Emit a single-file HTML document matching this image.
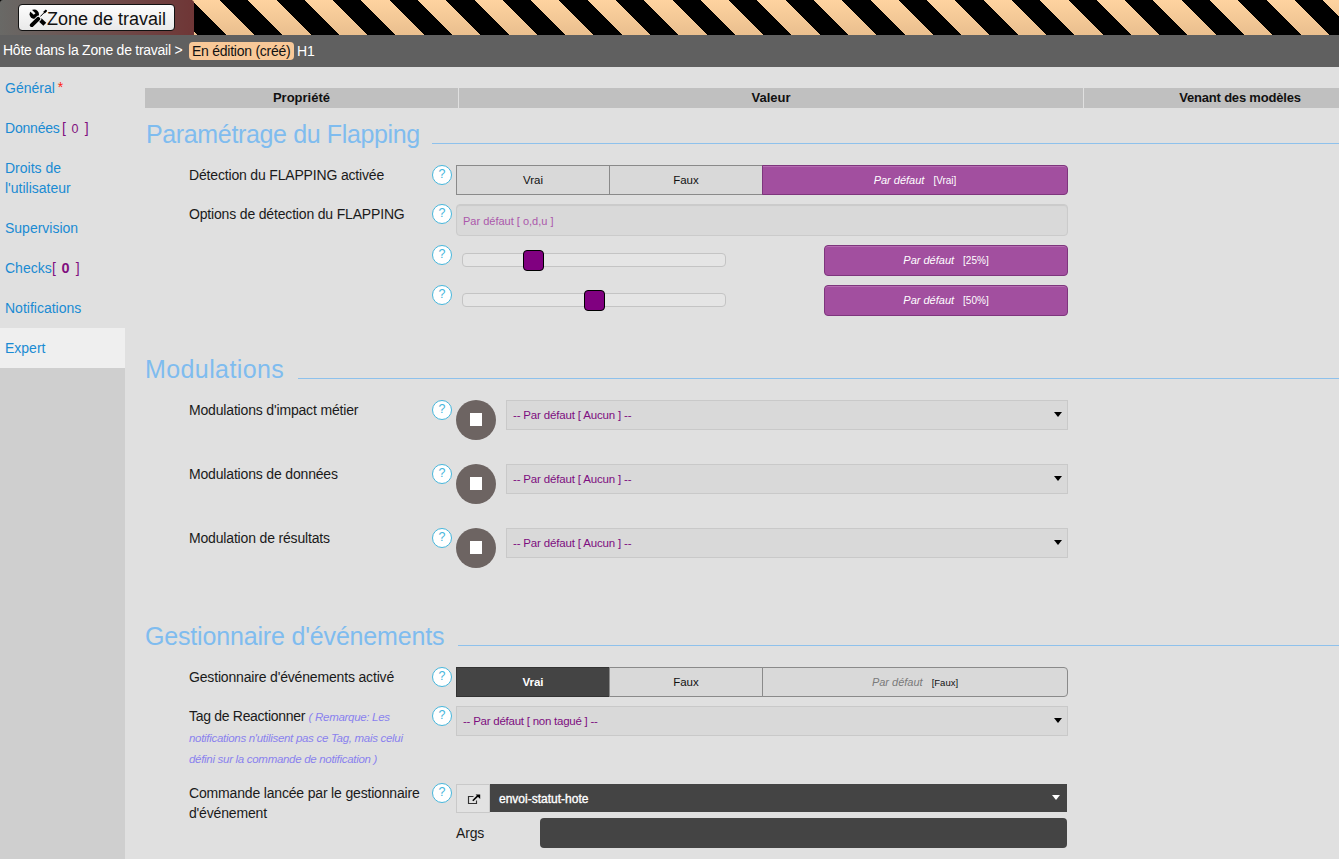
<!DOCTYPE html>
<html><head><meta charset="utf-8">
<style>
*{box-sizing:border-box}
html,body{margin:0;padding:0}
body{width:1339px;height:859px;overflow:hidden;position:relative;background:#e0e0e0;font-family:"Liberation Sans",sans-serif;color:#222}
.abs{position:absolute}
#topbar{left:0;top:0;width:1339px;height:35px;
 background:repeating-linear-gradient(45deg,transparent 0,transparent 20px,#000 20px,#000 40px),linear-gradient(#fed3a0,#eabf8e)}
#zonebox{left:0;top:0;width:194px;height:35px;border-radius:3px 3px 0 0;background:linear-gradient(90deg,#696966 0%,#6f4a49 60%,#6f3636 100%)}
#zbtn{left:18px;top:4px;width:157px;height:27px;border:1px solid #111;border-radius:4px;background:linear-gradient(#fdfdfd,#e9e9e9);}
#zbtn span{position:absolute;left:28px;top:4px;font-size:18px;color:#111;white-space:nowrap}
#crumb{left:0;top:35px;width:1339px;height:32px;background:#606060;color:#fff;font-size:14px;letter-spacing:-0.26px}
#crumb .t{position:absolute;left:3px;top:7px;white-space:nowrap}
#badge{left:189px;top:42px;width:105px;height:18px;background:#f8c898;border-radius:4px;color:#111;font-size:14px;line-height:18px;padding-left:3px;white-space:nowrap;letter-spacing:-0.25px}
#h1{left:297px;top:42px;color:#fff;font-size:14px;line-height:18px}
#side{left:0;top:68px;width:125px;height:792px;background:#cfcfcf}
.si{position:absolute;left:0;width:125px;background:#e0e0e0;color:#1a8bd3;font-size:14px;line-height:20px;padding:10px 5px}
.br{color:#80107f;position:absolute;top:10px}
.hdr{top:88px;height:20px;background:#c0c0c0;font-weight:bold;font-size:13px;line-height:20px;text-align:center;color:#111}
.title{left:146px;font-size:25px;color:#7fbcef;white-space:nowrap}
.tline{height:1px;background:#8ec1ec}
.lbl{left:189px;font-size:14px;color:#1a1a1a;white-space:nowrap;letter-spacing:-0.17px}
.rem{color:#8a82ee;font-size:11.5px;font-style:italic;letter-spacing:-0.3px}
.help{width:20px;height:20px;border:1.5px solid #46b6dc;border-radius:50%;background:#fff;color:#46b6dc;font-size:12.5px;line-height:17px;text-align:center}

.bg{border:1px solid #8a8a8a;background:#d9d9d9;font-size:11.5px;line-height:28px;text-align:center;color:#111}
.pur{background:#a24f9f;border:1px solid #7e357d;box-shadow:inset 0 1px 0 #b66db2;color:#fff;text-align:center;font-size:12px;white-space:nowrap}
.pur i,.grey i{font-style:italic;font-size:11px}
.pur small,.grey small{font-size:10px;margin-left:9px}
.track{height:14px;border:1px solid #c4c4c4;background:#e5e5e5;border-radius:4px}
.thumb{width:21px;height:21px;border:1.5px solid #000;background:#800080;border-radius:4px}
.inp{border:1px solid #cbcbcb;background:#d9d9d9;border-radius:4px;box-shadow:inset 0 1px 1px rgba(0,0,0,0.07)}
.sel{border:1px solid #c9c9c9;background:#d9d9d9;color:#7d0d7f;font-size:11.5px;letter-spacing:-0.17px;white-space:nowrap}
.sel span{position:absolute;left:6px;top:8px}
.arr{position:absolute;width:0;height:0;border-left:4px solid transparent;border-right:4px solid transparent;border-top:5px solid #000}
.circ{width:40px;height:40px;border-radius:50%;background:#6d6462}
.circ:after{content:"";position:absolute;left:13.7px;top:13.3px;width:12.8px;height:12.8px;background:#fff}
</style></head><body>
<div id="topbar" class="abs"></div>
<div id="zonebox" class="abs"></div>
<div id="zbtn" class="abs"><span>Zone de travail</span></div>
<svg class="abs" style="left:29px;top:9px" width="18" height="18" viewBox="0 0 18 18">
 <line x1="5.5" y1="5.5" x2="15.8" y2="15.2" stroke="#000" stroke-width="4.2"/>
 <circle cx="5.3" cy="5.2" r="4.7" fill="#000"/>
 <line x1="1.2" y1="0.8" x2="5.6" y2="5" stroke="#f6f6f6" stroke-width="2.4"/>
 <line x1="17.2" y1="1.6" x2="9.5" y2="9.3" stroke="#f6f6f6" stroke-width="2.6"/>
 <line x1="17.2" y1="1.6" x2="9.5" y2="9.3" stroke="#000" stroke-width="1"/>
 <line x1="15" y1="3.6" x2="17.6" y2="1.2" stroke="#000" stroke-width="2.2"/>
 <line x1="9.6" y1="9.4" x2="2.8" y2="16.2" stroke="#f6f6f6" stroke-width="5.6" stroke-linecap="round"/>
 <line x1="9.2" y1="9.8" x2="2.8" y2="16.2" stroke="#000" stroke-width="4" stroke-linecap="round"/>
</svg>
<div id="crumb" class="abs"><span class="t">Hôte dans la Zone de travail &gt;</span></div>
<div id="badge" class="abs">En édition (créé)</div>
<div id="h1" class="abs">H1</div>

<div id="side" class="abs">
 <div class="si" style="top:0;height:40px">Général<span style="color:#f21;margin-left:3px;position:relative;top:-1px">*</span></div>
 <div class="si" style="top:40px;height:40px"><span style="letter-spacing:-0.2px">Données</span><span class="br" style="left:62px">[</span><span class="br" style="left:71.5px;top:11px;font-size:12.5px">0</span><span class="br" style="left:84.7px">]</span></div>
 <div class="si" style="top:80px;height:60px">Droits de<br>l'utilisateur</div>
 <div class="si" style="top:140px;height:40px">Supervision</div>
 <div class="si" style="top:180px;height:40px">Checks<span class="br" style="left:52px">[</span><span class="br" style="left:61.6px;font-weight:bold;font-size:14.5px">0</span><span class="br" style="left:75.7px">]</span></div>
 <div class="si" style="top:220px;height:40px">Notifications</div>
 <div class="si" style="top:260px;height:40px;background:#efefef">Expert</div>
</div>

<div class="abs hdr" style="left:145px;width:313px">Propriété</div>
<div class="abs hdr" style="left:459px;width:624px">Valeur</div>
<div class="abs hdr" style="left:1084px;width:312px;letter-spacing:-0.2px">Venant des modèles</div>

<div class="abs title" style="top:120px;letter-spacing:-0.36px">Paramétrage du Flapping</div>
<div class="abs tline" style="left:432px;top:143px;width:907px"></div>

<div class="abs title" style="top:355px;left:145px;letter-spacing:0.4px">Modulations</div>
<div class="abs tline" style="left:298px;top:378px;width:1041px"></div>

<div class="abs title" style="top:622px;left:145px;letter-spacing:-0.17px">Gestionnaire d'événements</div>
<div class="abs tline" style="left:458px;top:645px;width:881px"></div>


<!-- Flapping -->
<div class="abs lbl" style="top:167px">Détection du FLAPPING activée</div>
<div class="abs help" style="left:432px;top:165px">?</div>
<div class="abs bg" style="left:456px;top:165px;width:154px;height:30px">Vrai</div>
<div class="abs bg" style="left:609px;top:165px;width:154px;height:30px">Faux</div>
<div class="abs pur" style="left:762px;top:165px;width:306px;height:30px;line-height:28px;border-radius:0 4px 4px 0"><i>Par défaut</i><small>[Vrai]</small></div>

<div class="abs lbl" style="top:206px">Options de détection du FLAPPING</div>
<div class="abs help" style="left:432px;top:204px">?</div>
<div class="abs inp" style="left:456px;top:204px;width:612px;height:32px;color:#ab58ab;font-size:11px;line-height:32px;padding-left:6px">Par défaut [ o,d,u ]</div>

<div class="abs help" style="left:432px;top:245px">?</div>
<div class="abs track" style="left:462px;top:253px;width:264px"></div>
<div class="abs thumb" style="left:523px;top:250px"></div>
<div class="abs pur" style="left:824px;top:245px;width:244px;height:31px;line-height:29px;border-radius:4px"><i>Par défaut</i><small>[25%]</small></div>

<div class="abs help" style="left:432px;top:285px">?</div>
<div class="abs track" style="left:462px;top:293px;width:264px"></div>
<div class="abs thumb" style="left:584px;top:290px"></div>
<div class="abs pur" style="left:824px;top:285px;width:244px;height:31px;line-height:29px;border-radius:4px"><i>Par défaut</i><small>[50%]</small></div>

<!-- Modulations -->
<div class="abs lbl" style="top:402px">Modulations d'impact métier</div>
<div class="abs help" style="left:432px;top:400px">?</div>
<div class="abs circ" style="left:456px;top:400px"></div>
<div class="abs sel" style="left:506px;top:400px;width:562px;height:30px"><span>-- Par défaut [ Aucun ] --</span><div class="arr" style="left:547px;top:11px"></div></div>

<div class="abs lbl" style="top:466px">Modulations de données</div>
<div class="abs help" style="left:432px;top:464px">?</div>
<div class="abs circ" style="left:456px;top:464px"></div>
<div class="abs sel" style="left:506px;top:464px;width:562px;height:30px"><span>-- Par défaut [ Aucun ] --</span><div class="arr" style="left:547px;top:11px"></div></div>

<div class="abs lbl" style="top:530px">Modulation de résultats</div>
<div class="abs help" style="left:432px;top:528px">?</div>
<div class="abs circ" style="left:456px;top:528px"></div>
<div class="abs sel" style="left:506px;top:528px;width:562px;height:30px"><span>-- Par défaut [ Aucun ] --</span><div class="arr" style="left:547px;top:11px"></div></div>

<!-- Gestionnaire -->
<div class="abs lbl" style="top:669px">Gestionnaire d'événements activé</div>
<div class="abs help" style="left:432px;top:667px">?</div>
<div class="abs bg" style="left:456px;top:667px;width:154px;height:30px;background:#444;border-color:#333;color:#fff;font-weight:bold">Vrai</div>
<div class="abs bg" style="left:609px;top:667px;width:154px;height:30px">Faux</div>
<div class="abs bg grey" style="left:762px;top:667px;width:306px;height:30px;border-radius:0 4px 4px 0;white-space:nowrap"><i style="color:#7a7a7a">Par défaut</i><small style="font-size:9.5px">[Faux]</small></div>

<div class="abs lbl" style="top:708px;letter-spacing:-0.3px">Tag de Reactionner <span class="rem">( Remarque: Les</span></div>
<div class="abs lbl rem" style="top:732px">notifications n'utilisent pas ce Tag, mais celui</div>
<div class="abs lbl rem" style="top:753px">défini sur la commande de notification )</div>
<div class="abs help" style="left:432px;top:706px">?</div>
<div class="abs sel" style="left:456px;top:706px;width:612px;height:30px"><span style="letter-spacing:-0.24px">-- Par défaut [ non tagué ] --</span><div class="arr" style="left:597px;top:11px"></div></div>

<div class="abs lbl" style="top:785px">Commande lancée par le gestionnaire</div>
<div class="abs lbl" style="top:805px">d'événement</div>
<div class="abs help" style="left:432px;top:783px">?</div>
<div class="abs" style="left:456px;top:784px;width:34px;height:29px;border:1px solid #c9c9c9;background:#e2e2e2"></div>
<svg class="abs" style="left:466px;top:793px" width="16" height="14" viewBox="0 0 16 14">
 <path d="M7.5 3.5 H2.5 V10.5 H10.5 V7.5" fill="none" stroke="#333" stroke-width="1.15"/>
 <line x1="6.8" y1="7.8" x2="12" y2="2.6" stroke="#000" stroke-width="1.6"/>
 <path d="M9.6 1.4 H14.2 V6 Z" fill="#000"/>
</svg>
<div class="abs" style="left:490px;top:784px;width:577px;height:28px;background:#444;color:#fff;font-size:12px;line-height:30px;padding-left:9px;-webkit-text-stroke:0.35px #fff">envoi-statut-hote<div class="arr" style="left:562px;top:11px;border-top-color:#fff"></div></div>
<div class="abs lbl" style="left:456px;top:825px">Args</div>
<div class="abs" style="left:540px;top:818px;width:527px;height:30px;background:#444;border-radius:4px"></div>
</body></html>
